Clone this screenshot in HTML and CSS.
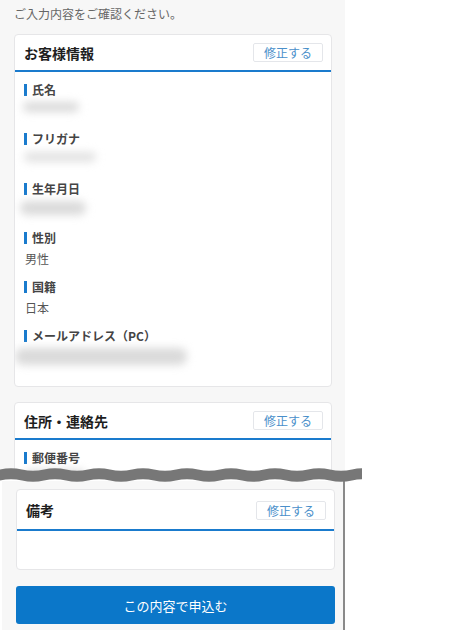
FILE: index.html
```
<!DOCTYPE html>
<html lang="ja">
<head>
<meta charset="utf-8">
<link rel="stylesheet" href="styles.css">
</head>
<body>
<div class="page">
  <div class="shot shot-top">
    <p class="intro">ご入力内容をご確認ください。</p>
    <section class="card">
      <div class="card-head">
        <h2 class="card-title">お客様情報</h2>
        <button class="edit">修正する</button>
      </div>
      <div class="card-body">
        <div class="field"><div class="label">氏名</div><div class="value"><span class="blur b1"></span></div></div>
        <div class="field"><div class="label">フリガナ</div><div class="value"><span class="blur b2"></span></div></div>
        <div class="field"><div class="label">生年月日</div><div class="value"><span class="blur b3"></span></div></div>
        <div class="field"><div class="label">性別</div><div class="value">男性</div></div>
        <div class="field"><div class="label">国籍</div><div class="value">日本</div></div>
        <div class="field"><div class="label">メールアドレス（PC）</div><div class="value"><span class="blur b4"></span></div></div>
      </div>
    </section>
    <section class="card card-second">
      <div class="card-head">
        <h2 class="card-title">住所・連絡先</h2>
        <button class="edit">修正する</button>
      </div>
      <div class="card-body">
        <div class="field"><div class="label">郵便番号</div><div class="value"><span class="blur b5"></span></div></div>
      </div>
    </section>
  </div>
  <svg class="wave" width="362" height="18" viewBox="0 0 362 18">
    <path fill="#777777" d="M0 3.5 q11 -2.5 22 0 t22 0 t22 0 t22 0 t22 0 t22 0 t22 0 t22 0 t22 0 t22 0 t22 0 t22 0 t22 0 t22 0 t22 0 t22 0 t22 0 L374 14.5 q-11 -2.5 -22 0 t-22 0 t-22 0 t-22 0 t-22 0 t-22 0 t-22 0 t-22 0 t-22 0 t-22 0 t-22 0 t-22 0 t-22 0 t-22 0 t-22 0 t-22 0 t-22 0 Z"/>
  </svg>
  <div class="shot shot-bottom">
    <section class="card">
      <div class="card-head card-head-tall">
        <h2 class="card-title">備考</h2>
        <button class="edit">修正する</button>
      </div>
      <div class="card-body card-body-empty"></div>
    </section>
    <button class="submit">この内容で申込む</button>
  </div>
</div>
</body>
</html>
```
FILE: styles.css
```
* { box-sizing: border-box; }
html, body { margin: 0; padding: 0; background: #ffffff; }
body { font-family: "Noto Sans CJK JP", "Noto Sans", sans-serif; color: #333; }
.page { position: relative; width: 469px; }
.shot { background: #f7f7f7; }
.shot-top { width: 345px; height: 472px; overflow: hidden; padding: 0 13px 0 14px; }
.intro { margin: 0; padding-top: 5px; height: 34px; font-size: 12px; line-height: 18px; color: #666; }
.card { background: #fff; border: 1px solid #e6e6e8; border-radius: 4px; overflow: hidden; }
.card-second { margin-top: 15px; }
.card-head { height: 37px; display: flex; align-items: center; justify-content: space-between; padding: 0 8px 0 9px; border-bottom: 2px solid #1a7bcd; }
.card-head-tall { height: 41px; padding-top: 1px; }
.card-title { margin: 0; font-size: 14px; font-weight: 700; color: #1e1e1e; line-height: 20px; }
.edit { width: 70px; height: 19px; padding: 0; background: #fff; border: 1px solid #e4e6ea; border-radius: 2px; color: #4a8fca; font-family: inherit; font-size: 12px; line-height: 17px; }
.card-body { padding: 9px 10px 20px 9px; }
.card-body-empty { height: 38px; padding: 0; }
.field + .field { margin-top: 10px; }
.label { position: relative; padding-left: 8px; font-size: 12px; font-weight: 700; line-height: 18px; color: #444; }
.label::before { content: ""; position: absolute; left: 0; top: 3px; width: 3px; height: 12px; background: #1a7bcd; }
.value { margin-top: 3px; height: 18px; font-size: 12px; line-height: 18px; color: #555; padding-left: 1px; }
.blur { display: block; background: #dadada; border-radius: 8px; filter: blur(4px); }
.b1 { width: 56px; height: 10px; margin: 3px 0 0 -2px; }
.b2 { width: 72px; height: 10px; margin: 4px 0 0 -1px; background: #e2e2e2; }
.b3 { width: 66px; height: 14px; margin: 2px 0 0 -5px; }
.b4 { width: 172px; height: 17px; margin: 2px 0 0 -10px; }
.b5 { width: 60px; height: 10px; margin: 3px 0 0 0; }
.wave { position: absolute; left: 0; top: 466px; display: block; }
.shot-bottom { width: 343px; margin-left: 2px; margin-top: 9px; border-right: 2px solid #8a8a8a; padding: 8px 8px 6px 14px; }
.submit { display: block; width: 100%; height: 38px; margin-top: 16px; background: #0b77c9; color: #fff; border: 0; border-radius: 3px; font-family: inherit; font-size: 13px; }
```
